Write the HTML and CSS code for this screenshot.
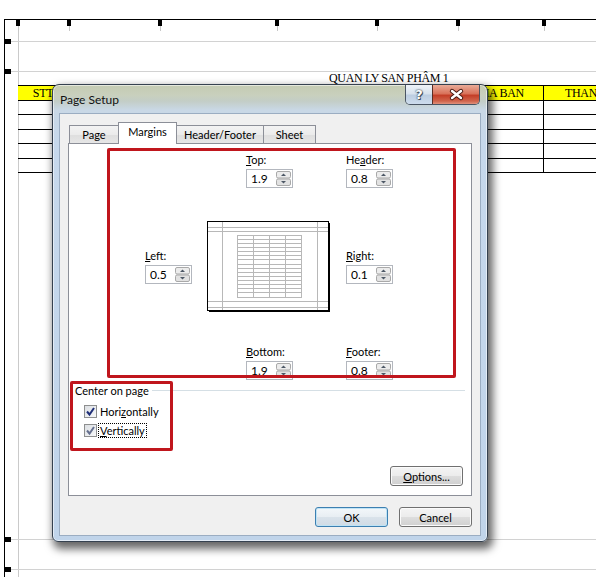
FILE: index.html
```html
<!DOCTYPE html>
<html>
<head>
<meta charset="utf-8">
<title>Page Setup</title>
<link rel="stylesheet" href="styles.css">
</head>
<body>
<div class="screen">
  <div class="sheet">
    <div class="vguide"></div>
    <div class="ruler">
      <div class="rcol w1"></div><div class="rcol w2"></div><div class="rcol w3"></div><div class="rcol w4"></div><div class="rcol w5"></div><div class="rcol w6"></div><div class="rcol w7"></div>
    </div>
    <div class="guide"></div>
    <div class="band"></div>
    <div class="guide"></div>
    <div class="table">
      <div class="titlerow">QUAN LY SAN PHÂM 1</div>
      <div class="trow head"><div class="cell">STT</div><div class="cell"></div><div class="cell"></div><div class="cell"></div><div class="cell"></div><div class="cell">GIA BAN</div><div class="cell">THANH TIEN</div></div>
      <div class="trow r13"><div class="cell"></div><div class="cell"></div><div class="cell"></div><div class="cell"></div><div class="cell"></div><div class="cell"></div><div class="cell"></div></div>
      <div class="trow r14"><div class="cell"></div><div class="cell"></div><div class="cell"></div><div class="cell"></div><div class="cell"></div><div class="cell"></div><div class="cell"></div></div>
      <div class="trow r13"><div class="cell"></div><div class="cell"></div><div class="cell"></div><div class="cell"></div><div class="cell"></div><div class="cell"></div><div class="cell"></div></div>
      <div class="trow r14"><div class="cell"></div><div class="cell"></div><div class="cell"></div><div class="cell"></div><div class="cell"></div><div class="cell"></div><div class="cell"></div></div>
      <div class="trow r13"><div class="cell"></div><div class="cell"></div><div class="cell"></div><div class="cell"></div><div class="cell"></div><div class="cell"></div><div class="cell"></div></div>
    </div>
    <div class="bottomguides">
      <div class="guide"></div>
      <div class="band"></div>
      <div class="guide"></div>
      <div class="band small"></div>
    </div>
  </div>

  <div class="dialog">
    <div class="titlebar">
      <span class="title">Page Setup</span>
      <div class="capbtns">
        <div class="cb help">?</div>
        <div class="cb close">
          <svg width="46" height="18" viewBox="0 0 46 18"><path d="M19 5 L28 12 M28 5 L19 12" stroke="#4a1c14" stroke-width="4.4" stroke-linecap="round" fill="none"/><path d="M19 5 L28 12 M28 5 L19 12" stroke="#ffffff" stroke-width="2.4" stroke-linecap="round" fill="none"/></svg>
        </div>
      </div>
    </div>
    <div class="client">
      <div class="tabs">
        <div class="tab t-page">Page</div>
        <div class="tab t-margins active">Margins</div>
        <div class="tab t-hf">Header/Footer</div>
        <div class="tab t-sheet">Sheet</div>
      </div>
      <div class="panel">
        <div class="mgrid">
          <div class="field f-top">
            <div class="lbl"><u>T</u>op:</div>
            <div class="spin"><span class="val">1.9</span><svg width="15" height="15" viewBox="0 0 15 15"><rect x="0.5" y="0.5" width="14" height="6.5" rx="1.5" fill="#ececec" stroke="#a9a9a9"/><rect x="0.5" y="8" width="14" height="6.5" rx="1.5" fill="#e2e2e2" stroke="#a9a9a9"/><path d="M5 5 L7.5 2.5 L10 5Z" fill="#4d5866"/><path d="M5 10 L7.5 12.5 L10 10Z" fill="#4d5866"/></svg></div>
          </div>
          <div class="field f-header">
            <div class="lbl">He<u>a</u>der:</div>
            <div class="spin"><span class="val">0.8</span><svg width="15" height="15" viewBox="0 0 15 15"><rect x="0.5" y="0.5" width="14" height="6.5" rx="1.5" fill="#ececec" stroke="#a9a9a9"/><rect x="0.5" y="8" width="14" height="6.5" rx="1.5" fill="#e2e2e2" stroke="#a9a9a9"/><path d="M5 5 L7.5 2.5 L10 5Z" fill="#4d5866"/><path d="M5 10 L7.5 12.5 L10 10Z" fill="#4d5866"/></svg></div>
          </div>
          <div class="field f-left">
            <div class="lbl"><u>L</u>eft:</div>
            <div class="spin"><span class="val">0.5</span><svg width="15" height="15" viewBox="0 0 15 15"><rect x="0.5" y="0.5" width="14" height="6.5" rx="1.5" fill="#ececec" stroke="#a9a9a9"/><rect x="0.5" y="8" width="14" height="6.5" rx="1.5" fill="#e2e2e2" stroke="#a9a9a9"/><path d="M5 5 L7.5 2.5 L10 5Z" fill="#4d5866"/><path d="M5 10 L7.5 12.5 L10 10Z" fill="#4d5866"/></svg></div>
          </div>
          <div class="preview">
            <svg width="123" height="91" viewBox="0 0 123 91">
              <rect x="0.5" y="0.5" width="121" height="89" fill="#ffffff" stroke="#000"/>
              <path d="M122 2 V91 M2 90 H123" stroke="#000" stroke-width="2" fill="none"/>
              <g stroke="#b8b8b8" stroke-width="1" fill="none">
                <path d="M1 6.5 H121 M1 10.5 H121 M1 80.5 H121 M1 86.5 H121 M15.5 1 V89 M110.5 1 V89"/>
                <rect x="30.5" y="14.5" width="64" height="62"/>
                <path d="M46.5 14.5 V76.5 M62.5 14.5 V76.5 M78.5 14.5 V76.5"/>
                <path d="M30.5 18.5 H94.5 M30.5 22.5 H94.5 M30.5 26.5 H94.5 M30.5 30.5 H94.5 M30.5 34.5 H94.5 M30.5 38.5 H94.5 M30.5 43.5 H94.5 M30.5 47.5 H94.5 M30.5 51.5 H94.5 M30.5 55.5 H94.5 M30.5 59.5 H94.5 M30.5 63.5 H94.5 M30.5 67.5 H94.5 M30.5 71.5 H94.5"/>
              </g>
            </svg>
          </div>
          <div class="field f-right">
            <div class="lbl"><u>R</u>ight:</div>
            <div class="spin"><span class="val">0.1</span><svg width="15" height="15" viewBox="0 0 15 15"><rect x="0.5" y="0.5" width="14" height="6.5" rx="1.5" fill="#ececec" stroke="#a9a9a9"/><rect x="0.5" y="8" width="14" height="6.5" rx="1.5" fill="#e2e2e2" stroke="#a9a9a9"/><path d="M5 5 L7.5 2.5 L10 5Z" fill="#4d5866"/><path d="M5 10 L7.5 12.5 L10 10Z" fill="#4d5866"/></svg></div>
          </div>
          <div class="field f-bottom">
            <div class="lbl"><u>B</u>ottom:</div>
            <div class="spin"><span class="val">1.9</span><svg width="15" height="15" viewBox="0 0 15 15"><rect x="0.5" y="0.5" width="14" height="6.5" rx="1.5" fill="#ececec" stroke="#a9a9a9"/><rect x="0.5" y="8" width="14" height="6.5" rx="1.5" fill="#e2e2e2" stroke="#a9a9a9"/><path d="M5 5 L7.5 2.5 L10 5Z" fill="#4d5866"/><path d="M5 10 L7.5 12.5 L10 10Z" fill="#4d5866"/></svg></div>
          </div>
          <div class="field f-footer">
            <div class="lbl"><u>F</u>ooter:</div>
            <div class="spin"><span class="val">0.8</span><svg width="15" height="15" viewBox="0 0 15 15"><rect x="0.5" y="0.5" width="14" height="6.5" rx="1.5" fill="#ececec" stroke="#a9a9a9"/><rect x="0.5" y="8" width="14" height="6.5" rx="1.5" fill="#e2e2e2" stroke="#a9a9a9"/><path d="M5 5 L7.5 2.5 L10 5Z" fill="#4d5866"/><path d="M5 10 L7.5 12.5 L10 10Z" fill="#4d5866"/></svg></div>
          </div>
        </div>

        <div class="group">
          <div class="ghead"><span>Center on page</span><div class="gline"></div></div>
          <div class="chk first">
            <div class="box"><svg width="11" height="11" viewBox="0 0 11 11"><path d="M2 5.5 L4.5 8.5 L9 2" stroke="#1f2f78" stroke-width="2" fill="none"/></svg></div>
            <span class="clbl">Hori<u>z</u>ontally</span>
          </div>
          <div class="chk">
            <div class="box"><svg width="11" height="11" viewBox="0 0 11 11"><path d="M2 5.5 L4.5 8.5 L9 2" stroke="#66708f" stroke-width="2" fill="none"/></svg></div>
            <span class="clbl focus"><u>V</u>ertically</span>
          </div>
        </div>

        <div class="btn options"><u>O</u>ptions...</div>

        <div class="redbox rb1"></div>
        <div class="redbox rb2"></div>
      </div>
      <div class="buttons">
        <div class="btn ok">OK</div>
        <div class="btn">Cancel</div>
      </div>
    </div>
  </div>
</div>
</body>
</html>
```
FILE: styles.css
```css
body {
  margin: 0;
}

.screen {
  position: relative;
  width: 596px;
  height: 577px;
  box-sizing: border-box;
  padding: 19px 0 0 4px;
  overflow: hidden;
  background: #ffffff;
  font-family: Lato, "Noto Sans", sans-serif;
  font-size: 11px;
  color: #000;
}

/* ---------- spreadsheet background ---------- */
.sheet {
  position: relative;
  height: 558px;
  box-sizing: border-box;
  border-top: 1px solid #000;
  border-left: 1px solid #000;
  display: flex;
  flex-direction: column;
  font-family: "Liberation Serif", serif;
  font-size: 12px;
}

.vguide {
  position: absolute;
  left: 13px;
  top: 6px;
  bottom: 0;
  width: 1px;
  background: #cacaca;
}

.ruler {
  display: flex;
  height: 21px;
  padding-left: 13px;
  flex: none;
}

.rcol {
  position: relative;
  flex: none;
}

.rcol::before {
  content: "";
  position: absolute;
  left: -2px;
  top: 0;
  width: 4px;
  height: 6px;
  background: #000;
}

.rcol::after {
  content: "";
  position: absolute;
  left: 0;
  top: 6px;
  width: 1px;
  height: 5px;
  background: #c8c8c8;
}

.w1 { width: 51px; }
.w2 { width: 91px; }
.w3 { width: 117px; }
.w4 { width: 100px; }
.w5 { width: 81px; }
.w6 { width: 86px; }
.w7 { width: 112px; }

.guide {
  position: relative;
  height: 1px;
  background: #d2d2d2;
  flex: none;
}

.guide::before {
  content: "";
  position: absolute;
  left: -1px;
  top: -2px;
  width: 7px;
  height: 5px;
  background: #000;
}

.band {
  height: 29px;
  flex: none;
}

.band.small {
  height: 7px;
}

.table {
  position: relative;
  padding-left: 13px;
  flex: none;
}

.titlerow {
  height: 13px;
  line-height: 13px;
  padding-left: 311px;
  letter-spacing: -0.35px;
  white-space: nowrap;
}

.trow {
  display: grid;
  grid-template-columns: 51px 91px 117px 100px 81px 86px 112px;
  border-bottom: 1px solid #000;
}

.trow.head {
  border-top: 1px solid #000;
  height: 14px;
  line-height: 14px;
}

.trow.head .cell {
  background: #ffff00;
}

.r13 { height: 13px; }
.r14 { height: 14px; }

.cell {
  box-sizing: border-box;
  border-right: 1px solid #000;
  text-align: center;
  white-space: nowrap;
  overflow: hidden;
  letter-spacing: -0.3px;
}

.bottomguides {
  margin-top: auto;
  display: flex;
  flex-direction: column;
}

/* ---------- dialog ---------- */
.dialog {
  position: absolute;
  left: 52px;
  top: 84px;
  width: 436px;
  height: 458px;
  box-sizing: border-box;
  border: 1px solid #35414f;
  border-radius: 7px 7px 6px 6px;
  padding: 0 6px 5px 6px;
  display: flex;
  flex-direction: column;
  background: linear-gradient(180deg, #c4cbb2 0px, #c9d0bd 10px, #c3cdc6 16px, #c9d8e6 25px, #c6d8ec 60px, #c0d4ea 100%);
  box-shadow: inset 0 0 0 1px rgba(255, 255, 255, 0.55), 3px 5px 9px 2px rgba(0, 0, 0, 0.6);
}

.titlebar {
  height: 28px;
  display: flex;
  align-items: center;
  padding-left: 1px;
  flex: none;
}

.title {
  font-size: 12px;
  color: #111;
}

.capbtns {
  margin-left: auto;
  margin-right: 1px;
  align-self: flex-start;
  display: flex;
  height: 19px;
  border: 1px solid #4a5563;
  border-top: none;
  border-radius: 0 0 5px 5px;
  overflow: hidden;
}

.cb {
  display: flex;
  align-items: center;
  justify-content: center;
}

.help {
  width: 26px;
  background: linear-gradient(180deg, #eef3f8 0%, #d6e1ec 48%, #bccde0 52%, #cddced 100%);
  color: #fff;
  font-family: "DejaVu Sans", sans-serif;
  font-weight: bold;
  font-size: 13px;
  text-shadow: 0 0 1px #34404d, 0 0 2px #34404d, 1px 1px 0 #4a5666;
}

.close {
  width: 46px;
  border-left: 1px solid #5a2d24;
  background: linear-gradient(180deg, #e9ab98 0%, #d9735b 45%, #c43f28 55%, #d0654c 85%, #e0917c 100%);
}

.client {
  flex: 1;
  display: flex;
  flex-direction: column;
  background: #f0f0f0;
  border: 1px solid #9badc2;
  padding: 8px;
}

.tabs {
  position: relative;
  z-index: 1;
  display: flex;
  align-items: flex-end;
  height: 22px;
  padding-left: 1px;
  flex: none;
}

.tab {
  box-sizing: border-box;
  height: 18px;
  margin-bottom: 1px;
  border: 1px solid #8c8f98;
  border-bottom: none;
  background: linear-gradient(180deg, #f3f3f3 0%, #ebebeb 50%, #dedede 51%, #e6e6e6 100%);
  text-align: center;
  line-height: 17px;
  margin-left: -1px;
}

.tab:first-child {
  margin-left: 0;
}

.tab.active {
  height: 22px;
  margin-bottom: 0;
  background: #ffffff;
  line-height: 18px;
  position: relative;
}

.t-page { width: 50px; }
.t-margins { width: 59px; }
.t-hf { width: 88px; }
.t-sheet { width: 53px; }

.panel {
  position: relative;
  margin-top: -1px;
  height: 353px;
  box-sizing: border-box;
  background: #ffffff;
  border: 1px solid #8c8f98;
  display: flex;
  flex-direction: column;
  flex: none;
}

.mgrid {
  display: grid;
  grid-template-columns: 62px 139px 47px;
  grid-template-rows: 35px 91px 36px;
  row-gap: 33px;
  margin: 9px 0 0 76px;
}

.field {
  display: flex;
  flex-direction: column;
  gap: 2px;
}

.lbl {
  line-height: 14px;
  white-space: nowrap;
}

.f-top { grid-column: 2; grid-row: 1; margin-left: 39px; }
.f-header { grid-column: 3; grid-row: 1; }
.f-left { grid-column: 1; grid-row: 2; align-self: center; }
.preview { grid-column: 2; grid-row: 2; line-height: 0; }
.f-right { grid-column: 3; grid-row: 2; align-self: center; }
.f-bottom { grid-column: 2; grid-row: 3; margin-left: 39px; }
.f-footer { grid-column: 3; grid-row: 3; }

.spin {
  display: flex;
  align-items: center;
  width: 47px;
  height: 19px;
  box-sizing: border-box;
  border: 1px solid #b3b7be;
  background: #ffffff;
}

.val {
  flex: 1;
  padding-left: 4px;
  font-size: 12px;
}

.spin svg {
  margin-right: 1px;
}

.group {
  margin-top: 2px;
}

.ghead {
  display: flex;
  align-items: center;
  height: 14px;
  padding-left: 6px;
  margin-right: 6px;
}

.gline {
  flex: 1;
  height: 1px;
  margin-left: 3px;
  background: #d5dfe5;
}

.chk {
  display: flex;
  align-items: center;
  height: 19px;
  padding-left: 15px;
}

.chk.first {
  margin-top: 5px;
}

.box {
  width: 13px;
  height: 13px;
  box-sizing: border-box;
  border: 1px solid #8e8f8f;
  background: linear-gradient(135deg, #dcdfe3 0%, #f7f8f9 100%);
  display: flex;
  align-items: center;
  justify-content: center;
}

.clbl {
  margin-left: 3px;
  line-height: 13px;
}

.clbl.focus {
  margin-left: 2px;
  padding: 0 1px;
  outline: 1px dotted #000;
}

.btn {
  box-sizing: border-box;
  width: 73px;
  height: 20px;
  border: 1px solid #707070;
  border-radius: 3px;
  background: linear-gradient(180deg, #f4f4f4 0%, #ececec 48%, #dddddd 52%, #d0d0d0 100%);
  box-shadow: inset 0 0 0 1px #fbfbfb;
  display: flex;
  align-items: center;
  justify-content: center;
  flex: none;
}

.options {
  margin-top: auto;
  align-self: flex-end;
  margin-right: 8px;
  margin-bottom: 9px;
}

.buttons {
  display: flex;
  justify-content: flex-end;
  gap: 11px;
  margin-top: 11px;
  flex: none;
}

.btn.ok {
  border-color: #3c7fb1;
  background: linear-gradient(180deg, #f3f7fa 0%, #e8eef3 48%, #d9e2ea 52%, #d0dbe5 100%);
  box-shadow: inset 0 0 0 1px #bfe3f5;
}

.redbox {
  position: absolute;
  box-sizing: border-box;
  border: 3px solid #c0161d;
  border-radius: 2px;
  z-index: 2;
}

.rb1 {
  left: 38px;
  top: 4px;
  width: 349px;
  height: 230px;
}

.rb2 {
  left: 1px;
  top: 237px;
  width: 103px;
  height: 70px;
}
```
